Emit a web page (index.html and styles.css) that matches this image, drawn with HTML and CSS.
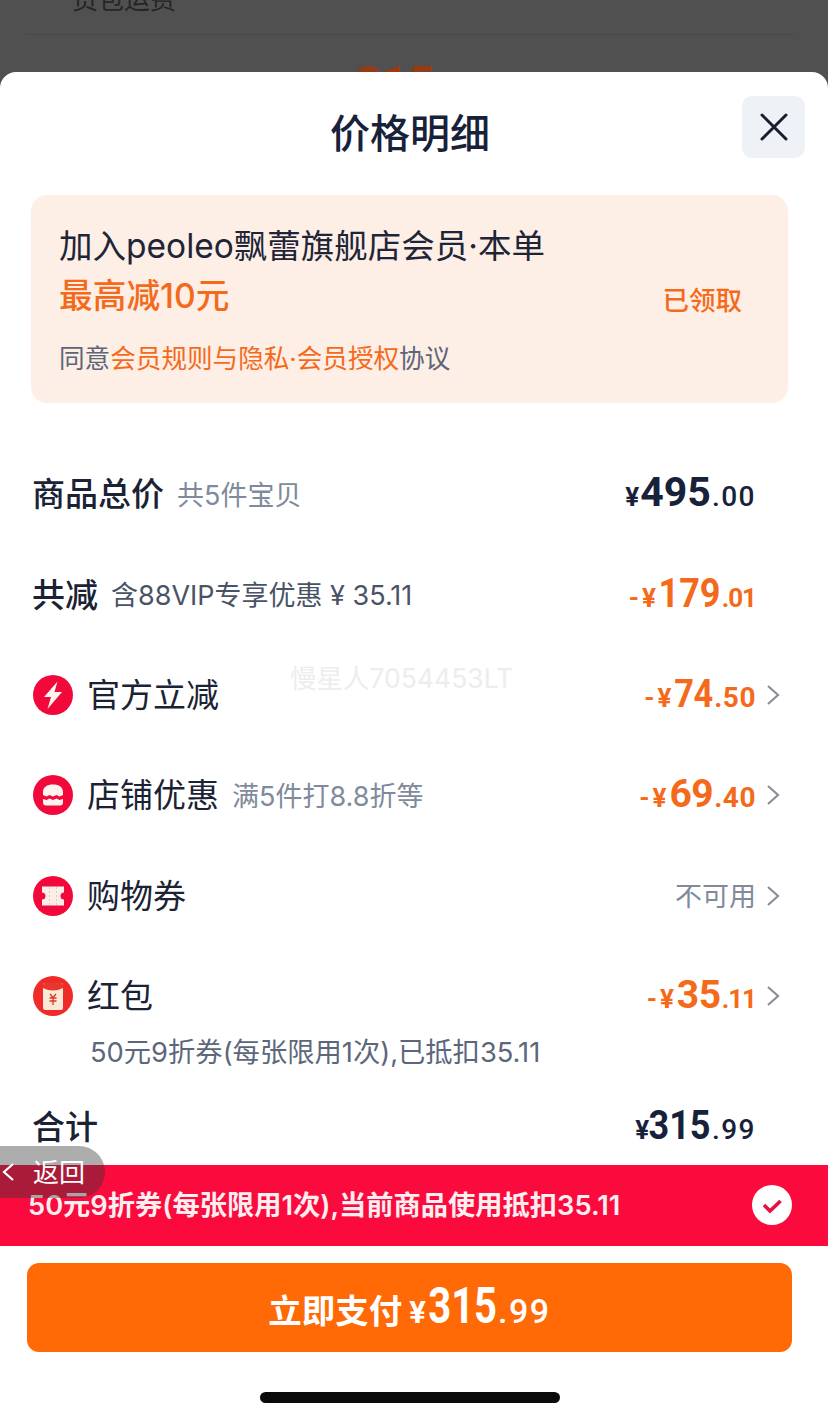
FILE: index.html
```html
<!DOCTYPE html>
<html lang="zh-CN">
<head>
<meta charset="utf-8">
<title>价格明细</title>
<link rel="stylesheet" href="styles.css">
</head>
<body>
<div class="page">
  <div class="backdrop">
    <div class="bd-label">货包运费</div>
    <div class="bd-line"></div>
    <div class="bd-price">315</div>
  </div>
  <main class="sheet">
    <header class="head">
      <h1 class="title">价格明细</h1>
      <button class="close" aria-label="关闭">
        <svg width="30" height="30" viewBox="0 0 30 30"><path d="M3 3 L27 27 M27 3 L3 27" stroke="#151d2e" stroke-width="3" stroke-linecap="round" fill="none"/></svg>
      </button>
    </header>

    <section class="banner">
      <div class="banner-main">
        <div class="b-line1">加入peoleo飘蕾旗舰店会员·本单</div>
        <div class="b-line2">最高减10元</div>
        <div class="b-line3">同意<span class="orange">会员规则与隐私·会员授权</span>协议</div>
      </div>
      <div class="b-action">已领取</div>
    </section>

    <section class="list">
      <div class="row">
        <span class="label strong">商品总价</span><span class="note">共5件宝贝</span>
        <span class="value dark"><i class="yen">¥</i><b class="int">495</b><i class="dec">.00</i></span>
        <span class="slot"></span>
      </div>
      <div class="row">
        <span class="label strong">共减</span><span class="note dim">含88VIP专享优惠 ¥ 35.11</span>
        <span class="value orange end"><i class="yen">-¥</i><b class="int tight">179</b><i class="dec small">.01</i></span>
        <span class="slot"></span>
      </div>
      <div class="row">
        <svg class="ico" viewBox="0 0 40 40"><circle cx="20" cy="20" r="20" fill="#f2093c"/><path d="M24.500 6.500 L11 22 H18 L14.500 34 L29 17 H21.500 Z" fill="#fdf3ef"/></svg>
        <span class="label">官方立减</span>
        <span class="value orange end"><i class="yen">-¥</i><b class="int mid narrow">74</b><i class="dec">.50</i></span>
        <svg class="slot" viewBox="0 0 14 22"><path d="M2 2 L12 11 L2 20" stroke="#8a8f99" stroke-width="2.2" fill="none"/></svg>
      </div>
      <div class="row">
        <svg class="ico" viewBox="0 0 40 40"><circle cx="20" cy="20" r="20" fill="#f2093c"/><path d="M10 20 V17 C10 12 14 9.500 20 9.500 C26 9.500 30 12 30 17 V20 L26.500 21.500 L23.500 20 L20 21.500 L16.500 20 L13.500 21.500 Z" fill="#fdf3ef"/><path d="M10 24 L13.500 25 L16.500 23.500 L20 25 L23.500 23.500 L26.500 25 L30 24 V27 Q30 30.500 27 30.500 H13 Q10 30.500 10 27 Z" fill="#fdf3ef"/></svg>
        <span class="label">店铺优惠</span><span class="note">满5件打8.8折等</span>
        <span class="value orange end"><i class="yen">-¥</i><b class="int mid">69</b><i class="dec">.40</i></span>
        <svg class="slot" viewBox="0 0 14 22"><path d="M2 2 L12 11 L2 20" stroke="#8a8f99" stroke-width="2.2" fill="none"/></svg>
      </div>
      <div class="row">
        <svg class="ico" viewBox="0 0 40 40"><circle cx="20" cy="20" r="20" fill="#f2093c"/><path d="M9 10.500 H31 V16.500 A3.500 3.500 0 0 0 31 23.500 V29.500 H9 V23.500 A3.500 3.500 0 0 0 9 16.500 Z" fill="#fbeee8"/><path d="M16.500 11 V29 M23.500 11 V29" stroke="#ecc4bf" stroke-width="1" stroke-dasharray="2 2"/></svg>
        <span class="label">购物券</span>
        <span class="value muted">不可用</span>
        <svg class="slot" viewBox="0 0 14 22"><path d="M2 2 L12 11 L2 20" stroke="#8a8f99" stroke-width="2.2" fill="none"/></svg>
      </div>
      <div class="row row-short">
        <svg class="ico" viewBox="0 0 40 40"><circle cx="20" cy="20" r="20" fill="#f02a28"/><rect x="10" y="7" width="20" height="27" rx="2" fill="#fbe9d6"/><path d="M10 9 Q10 7 12 7 H28 Q30 7 30 9 V12 Q20 17 10 12 Z" fill="#e6382c"/><path d="M17 18 L20 21.500 L23 18 M16.500 22 H23.500 M16.500 25 H23.500 M20 21.500 V29" stroke="#d83a26" stroke-width="1.300" fill="none"/></svg>
        <span class="label">红包</span>
        <span class="value orange end"><i class="yen">-¥</i><b class="int mid">35</b><i class="dec small">.11</i></span>
        <svg class="slot" viewBox="0 0 14 22"><path d="M2 2 L12 11 L2 20" stroke="#8a8f99" stroke-width="2.2" fill="none"/></svg>
      </div>
      <div class="subline">50元9折券(每张限用1次),已抵扣35.11</div>
      <div class="row row-total">
        <span class="label strong">合计</span>
        <span class="value dark"><i class="yen">¥</i><b class="int tight">315</b><i class="dec">.99</i></span>
        <span class="slot"></span>
      </div>
    </section>

    <section class="promo">
      <span class="promo-text">50元9折券(每张限用1次),当前商品使用抵扣35.11</span>
      <svg class="promo-check" viewBox="0 0 40 40"><circle cx="20" cy="20" r="20" fill="#fff"/><path d="M12 20 L18 26 L28.500 16" stroke="#e8103f" stroke-width="3.600" fill="none"/></svg>
    </section>

    <footer class="foot">
      <button class="pay"><span class="pay-label">立即支付</span><i class="pay-yen">¥</i><b class="pay-int">315</b><i class="pay-dec">.99</i></button>
      <div class="home"></div>
    </footer>

    <div class="watermark">慢星人7054453LT</div>
    <div class="back">
      <svg width="14" height="22" viewBox="0 0 14 22"><path d="M12 3 L3 11 L12 19" stroke="#fff" stroke-width="2.200" fill="none"/></svg>
      <span class="back-text">返回</span>
    </div>
  </main>
</div>
</body>
</html>
```

FILE: styles.css
```css
* { box-sizing: border-box; }
html, body { margin: 0; padding: 0; }
body {
  background: #fff;
  font-family: "Inter", "Noto Sans CJK SC", sans-serif;
  color: #1a2234;
}
i { font-style: normal; }
.page { width: 828px; height: 1418px; overflow: hidden; display: flex; flex-direction: column; background: #505050; }

.backdrop { height: 72px; flex: none; background: #505050; padding: 0 35px 0 26px; overflow: hidden; }
.bd-label { margin: -18px 0 0 46px; font-size: 26px; line-height: 36px; color: #262626; }
.bd-line { height: 1px; margin-top: 16px; background: #484848; }
.bd-price { margin: 23px 0 0 0; padding-right: 29px; text-align: center; font: 700 46px/50px "Roboto", sans-serif; color: #9a3a10; }

.sheet { position: relative; flex: 1; background: #fff; border-radius: 16px 16px 0 0; display: flex; flex-direction: column; }
.head { height: 123px; flex: none; display: flex; justify-content: center; padding: 33px 8px 0 0; }
.title { margin: 0; font-size: 40px; line-height: 58px; font-weight: 500; color: #18213a; }
.close { position: absolute; top: 24px; right: 23px; width: 63px; height: 62px; border: 0; border-radius: 10px; background: #eef2f6; display: flex; align-items: center; justify-content: center; padding: 0; }

.banner { margin: 0 40px 0 31px; height: 208px; flex: none; background: #fdeee6; border-radius: 16px; display: flex; align-items: center; justify-content: space-between; padding: 0 46px 0 28px; }
.banner-main { display: flex; flex-direction: column; }
.b-line1 { font-size: 33.500px; line-height: 44px; color: #1d2536; margin-top: 2px; }
.b-line2 { font-size: 33.700px; line-height: 46px; margin-top: 5px; font-weight: 500; color: #f46a1a; }
.b-line3 { font-size: 25.600px; line-height: 36px; margin-top: 22px; color: #5c6577; }
.b-action { font-size: 26.500px; line-height: 38px; font-weight: 500; color: #f46a1a; margin-top: 2px; }
.orange { color: #f46a1a; }

.list { flex: none; padding: 41px 48px 0 32px; }
.row { height: 100.4px; display: flex; align-items: center; }
.row-short { height: 76px; margin-top: 12px; }
.row-total { height: 95px; padding-top: 20px; }
.ico { width: 40px; height: 40px; flex: none; margin: 0 14px 0 1px; }
.label { font-size: 33px; line-height: 46px; color: #1a2234; }
.label.strong { font-weight: 500; }
.note { margin: 3px 0 0 13px; font-size: 27px; line-height: 36px; color: #7f8a9c; }
.note.dim { color: #4a5366; }
.value { margin-left: auto; margin-bottom: 4px; display: flex; align-items: baseline; font-family: "Roboto", sans-serif; }
.value.dark { color: #18213a; }
.value.dark .dec { letter-spacing: 1.500px; }
.value.muted { font-family: "Inter", "Noto Sans CJK SC", sans-serif; font-size: 27px; color: #7f8a9c; margin-bottom: 2px; }
.yen { font-size: 26px; font-weight: 700; }
.value.end .yen { letter-spacing: 3px; }
.int { display: inline-block; font-size: 41px; line-height: 46px; font-weight: 700; margin-left: 1px; }
.int.tight { transform: scaleX(.88); transform-origin: right; margin-left: -9px; }
.int.mid { font-size: 39px; letter-spacing: -.5px; margin-left: 0; margin-bottom: -2px; }
.int.mid.narrow { transform: scaleX(.88); transform-origin: right; margin-left: -5px; }
.dec { font-size: 28px; font-weight: 500; letter-spacing: .5px; margin-left: 1px; }
.dec.small { font-size: 26px; letter-spacing: -1px; }
.value.orange .dec { font-weight: 700; }
.slot { width: 14px; height: 22px; margin-left: 10px; flex: none; }
.subline { height: 36px; margin-left: 58px; padding-top: 1px; font-size: 27.300px; line-height: 36px; color: #5c677b; }

.promo { height: 81px; flex: none; background: #fb0a3e; display: flex; align-items: center; justify-content: space-between; padding: 0 36px 0 28px; }
.promo-text { font-size: 27.250px; font-weight: 600; color: #fdeef0; margin-bottom: 5px; }
.promo-check { width: 40px; height: 40px; flex: none; }

.foot { flex: 1; background: #fff; padding: 17px 36px 0 27px; display: flex; flex-direction: column; align-items: center; }
.pay { width: 100%; height: 89px; flex: none; border: 0; border-radius: 12px; background: #ff6a06; color: #fff; display: flex; align-items: baseline; justify-content: center; padding: 14px 0 0; font-family: "Roboto", sans-serif; }
.pay-label { font: 600 33.500px/46px "Inter", "Noto Sans CJK SC", sans-serif; margin-right: 7px; }
.pay-yen { font-size: 31px; font-weight: 700; }
.pay-int { display: inline-block; font-size: 50px; font-weight: 700; margin-left: -15px; transform: scaleX(.8); transform-origin: right; }
.pay-dec { font-size: 34px; font-weight: 500; margin-left: 1px; letter-spacing: 1.500px; }
.home { width: 300px; height: 11px; margin-top: 40px; border-radius: 6px; background: #0a0a0a; flex: none; }

.watermark { position: absolute; left: 290px; top: 588px; font-size: 26.500px; line-height: 36px; color: #ededed; white-space: nowrap; }
.back { position: absolute; left: 0; top: 1074px; width: 105px; height: 52px; border-radius: 0 26px 26px 0; background: rgba(50, 50, 50, .4); display: flex; align-items: center; gap: 18px; padding-left: 1px; color: #fff; font-size: 26px; }
.back-text { margin-bottom: 3px; }
```
